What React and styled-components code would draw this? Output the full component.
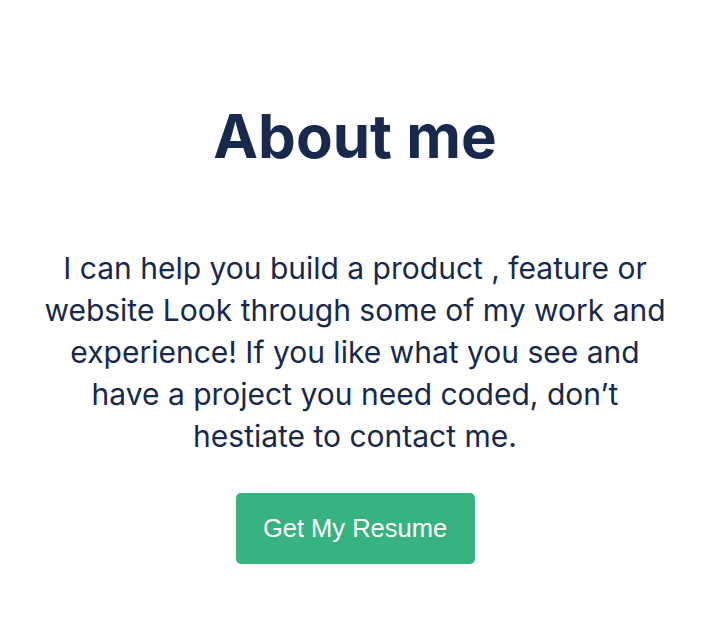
import React from 'react'
import styled, { createGlobalStyle } from 'styled-components'

const GlobalStyle = createGlobalStyle`
  body {
    margin: 0;
    background: #ffffff;
    font-family: Inter, "Liberation Sans", sans-serif;
  }
`

const Section = styled.section`
  display: flex;
  flex-direction: column;
  align-items: center;
  padding: 100px 20px 40px;
`

const Title = styled.h1`
  margin: 0;
  font-size: 60px;
  line-height: 72px;
  font-weight: 700;
  color: #172a4d;
`

const Text = styled.p`
  margin: 75px 0 0;
  max-width: 630px;
  font-size: 30px;
  line-height: 42px;
  font-weight: 400;
  color: #172a4d;
  text-align: center;
`

const ResumeButton = styled.button`
  margin-top: 36px;
  width: 239px;
  height: 71px;
  border: none;
  border-radius: 5px;
  background: #36b37e;
  color: #ffffff;
  font-family: "Liberation Sans", Arial, sans-serif;
  font-size: 25.5px;
  cursor: pointer;
`

export default function App() {
  return (
    <>
      <GlobalStyle />
      <Section>
        <Title>About me</Title>
        <Text>
          I can help you build a product , feature or website Look through some of my work and
          experience! If you like what you see and have a project you need coded, don’t hestiate
          to contact me.
        </Text>
        <ResumeButton>Get My Resume</ResumeButton>
      </Section>
    </>
  )
}
